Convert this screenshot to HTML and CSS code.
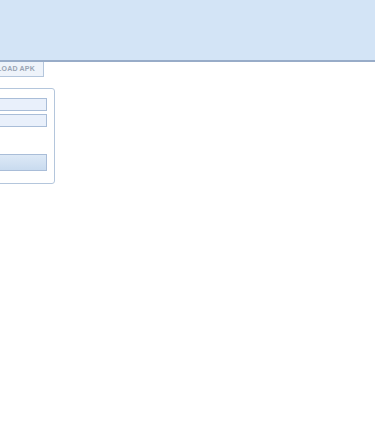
FILE: index.html
```html
<!DOCTYPE html>
<html lang="en">

<head>
    <meta charset="UTF-8">
    <meta name="viewport" content="width=device-width, initial-scale=1.0">
    <title>Login</title>
    <link rel="stylesheet" href="styles.css">
</head>

<body>
    <div class="header"></div>

    <div class="page">
        <div class="tabs">
            <span class="tab">DOWNLOAD APK</span>
        </div>

        <div class="login-box">
            <input type="text" class="field" aria-label="Username">
            <input type="password" class="field" aria-label="Password">
            <div class="spacer"></div>
            <button class="login-btn" type="button"></button>
        </div>
    </div>
</body>

</html>
```

FILE: styles.css
```css
:root {
    --header-bg: #d3e4f6;
    --header-line: #98acc8;
    --box-border: #b4c6dc;
    --field-border: #a9bdd8;
    --field-bg: #e9f0fb;
}

html,
body {
    margin: 0;
    padding: 0;
    overflow: hidden;
    background-color: white;
    font-family: 'Liberation Sans', Arial, sans-serif;
}

.header {
    height: 60px;
    background-color: var(--header-bg);
    border-bottom: 2px solid var(--header-line);
}

.page {
    margin-left: -200px;
}

.tabs {
    display: flex;
    justify-content: flex-end;
    width: 244px;
}

.tab {
    display: block;
    box-sizing: border-box;
    height: 15px;
    padding: 3px 8px 0 8px;
    font-size: 7px;
    font-weight: bold;
    color: #99a4b4;
    background-color: #eef3fa;
    border: 1px solid var(--box-border);
    border-top: none;
    letter-spacing: 0.2px;
}

.login-box {
    box-sizing: border-box;
    width: 255px;
    height: 96px;
    margin-top: 11px;
    padding: 9px 7px 0 0;
    border: 1px solid var(--box-border);
    border-radius: 3px;
    display: flex;
    flex-direction: column;
    align-items: flex-end;
    gap: 3px;
}

.field {
    display: block;
    box-sizing: border-box;
    width: 220px;
    height: 13px;
    margin: 0;
    padding: 0;
    border: 1px solid var(--field-border);
    background-color: var(--field-bg);
}

.spacer {
    height: 21px;
}

.login-btn {
    display: block;
    box-sizing: border-box;
    width: 220px;
    height: 17px;
    margin: 0;
    padding: 0;
    border: 1px solid var(--field-border);
    background: linear-gradient(#dde9f6, #c9dbef);
}
```
